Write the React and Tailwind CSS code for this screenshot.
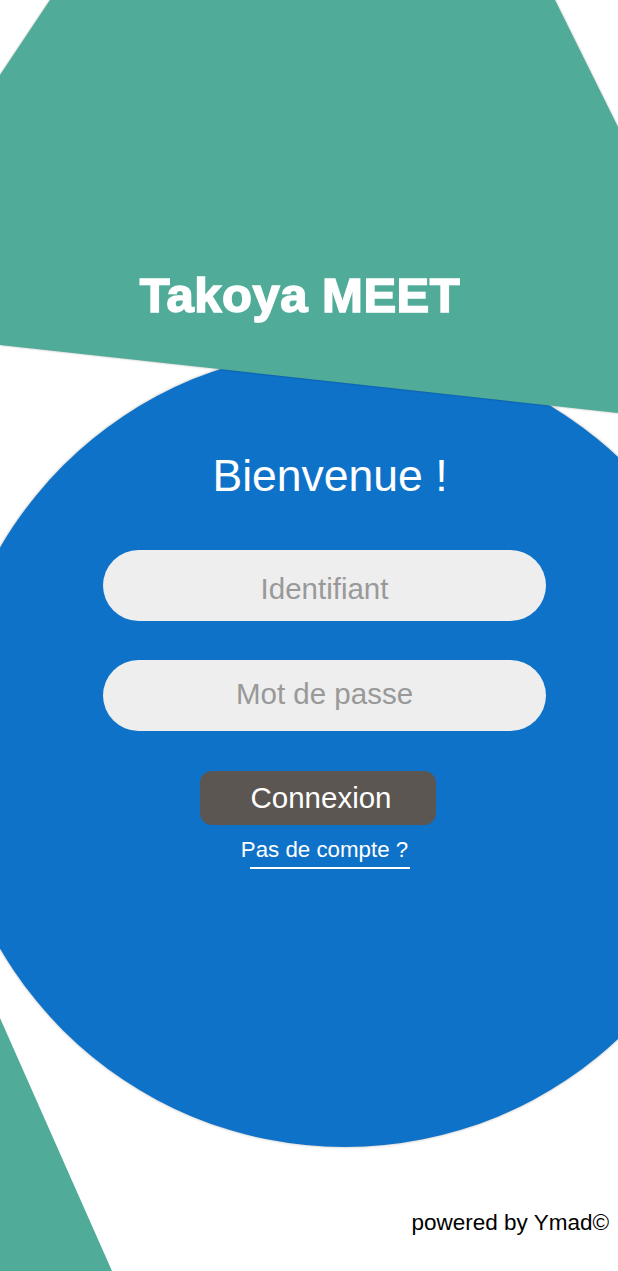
import React from 'react';

const App = () => {
  return (
    <div className="relative flex flex-col w-[618px] h-[1271px] overflow-hidden bg-white font-['Liberation_Sans',Arial,sans-serif]">
      {/* decorative background shapes */}
      <div className="absolute left-[-54px] top-[349px] w-[798px] h-[798px] rounded-full bg-[#0e72c9] shadow-[0_0_3px_rgba(0,0,0,0.3)]" />
      <div className="absolute left-0 bottom-0 w-[112px] h-[253px] bg-[#50ac99] [clip-path:polygon(0_0,100%_100%,0_100%)]" />

      <header className="relative z-10 h-[415px] drop-shadow-[0_0_1px_rgba(0,0,0,0.3)]">
        <div className="h-full bg-[#50ac99] [clip-path:polygon(50px_0,555px_0,618px_127px,618px_413px,0_345px,0_75px)] pt-[267px] pr-[18px] text-center">
          <h1 className="text-[49px] leading-[56px] font-bold text-white tracking-[0.5px] [-webkit-text-stroke:1.6px_white]">Takoya MEET</h1>
        </div>
      </header>

      <main className="relative z-10 w-[443px] ml-[103px] flex flex-col items-center">
        <h2 className="mt-[37px] pl-[11px] text-[44.5px] leading-[48px] text-white">Bienvenue !</h2>

        <input
          type="text"
          placeholder="Identifiant"
          className="mt-[50px] w-full h-[71px] pt-[6px] rounded-full bg-[#eeeeee] text-center text-[29.5px] text-[#333] placeholder:text-[#999999] outline-none"
        />
        <input
          type="password"
          placeholder="Mot de passe"
          className="mt-[39px] w-full h-[71px] pb-[3px] rounded-full bg-[#eeeeee] text-center text-[29.5px] text-[#333] placeholder:text-[#999999] outline-none"
        />

        <button className="self-start ml-[97px] mt-[40px] w-[236px] h-[54px] pl-[6px] rounded-[12px] bg-[#5b5651] text-white text-[29.5px] flex items-center justify-center">
          Connexion
        </button>

        <a href="#" className="mt-[12px] flex flex-col items-center text-white">
          <span className="text-[22.3px] leading-[26px]">Pas de compte ?</span>
          <span className="mt-[4px] ml-[11px] w-[160px] h-[2px] bg-white" />
        </a>
      </main>

      <footer className="relative z-10 mt-auto self-end pr-[9px] pb-[35px] text-[22.5px] leading-[26px] text-black">
        powered by Ymad©
      </footer>
    </div>
  );
};

export default App;
